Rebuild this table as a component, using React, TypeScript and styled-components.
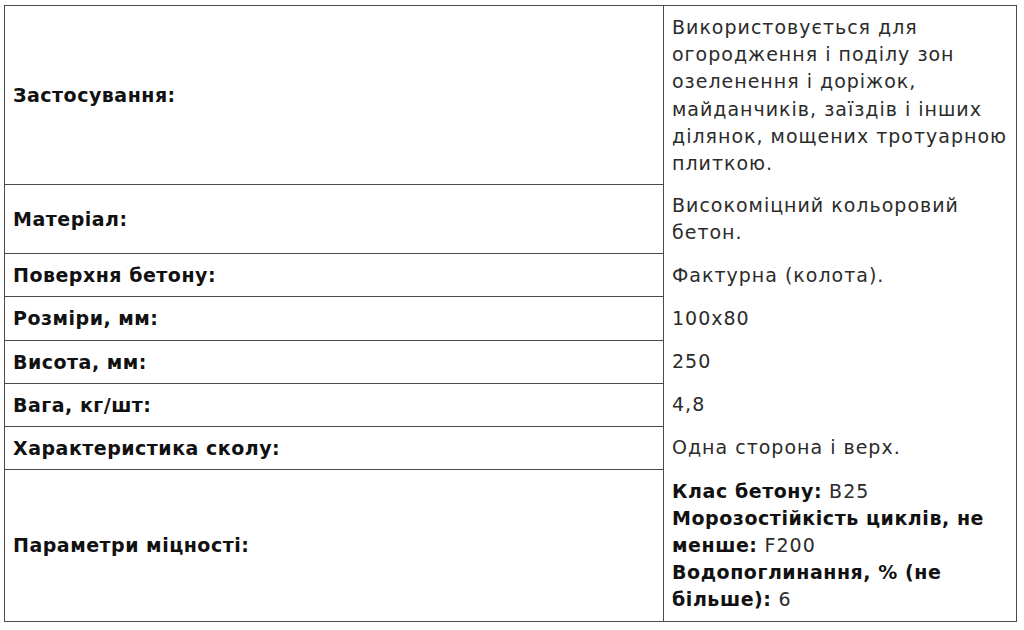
import React from 'react';
import styled, { createGlobalStyle } from 'styled-components';

const Global = createGlobalStyle`
  body {
    margin: 0;
    background: #fff;
    font-family: "DejaVu Sans", "Open Sans", sans-serif;
  }
`;

const Page = styled.div`
  padding: 5px 7px 0 4px;
`;

const Table = styled.table`
  width: 1013px;
  border-collapse: collapse;
  border: 1px solid #4a4a4a;
  font-size: 19px;
  line-height: 27.2px;
`;

const Label = styled.td`
  width: 642px;
  padding: 8px 8px 7px 8px;
  border-right: 1px solid #4a4a4a;
  border-bottom: 1px solid #4a4a4a;
  vertical-align: middle;
  font-weight: 700;
  letter-spacing: 0.5px;
  color: #111;
  white-space: nowrap;
`;

const Value = styled.td`
  padding: 8px 8px 7px 8px;
  vertical-align: top;
  letter-spacing: 1px;
  color: #2b2b2b;
  white-space: nowrap;
`;

const Strong = styled.b`
  font-weight: 700;
  letter-spacing: 0.55px;
  color: #111;
`;

type Spec = { label: string; lines: React.ReactNode[] };

const specs: Spec[] = [
  {
    label: 'Застосування:',
    lines: [
      'Використовується для',
      'огородження і поділу зон',
      'озеленення і доріжок,',
      'майданчиків, заїздів і інших',
      'ділянок, мощених тротуарною',
      'плиткою.',
    ],
  },
  { label: 'Матеріал:', lines: ['Високоміцний кольоровий', 'бетон.'] },
  { label: 'Поверхня бетону:', lines: ['Фактурна (колота).'] },
  { label: 'Розміри, мм:', lines: ['100x80'] },
  { label: 'Висота, мм:', lines: ['250'] },
  { label: 'Вага, кг/шт:', lines: ['4,8'] },
  { label: 'Характеристика сколу:', lines: ['Одна сторона і верх.'] },
  {
    label: 'Параметри міцності:',
    lines: [
      <><Strong>Клас бетону:</Strong> B25</>,
      <Strong>Морозостійкість циклів, не</Strong>,
      <><Strong>менше:</Strong> F200</>,
      <Strong>Водопоглинання, % (не</Strong>,
      <><Strong>більше):</Strong> 6</>,
    ],
  },
];

function App() {
  return (
    <>
      <Global />
      <Page>
        <Table>
          <tbody>
            {specs.map((s) => (
              <tr key={s.label}>
                <Label>{s.label}</Label>
                <Value>
                  {s.lines.map((l, i) => (
                    <React.Fragment key={i}>
                      {i > 0 && <br />}
                      {l}
                    </React.Fragment>
                  ))}
                </Value>
              </tr>
            ))}
          </tbody>
        </Table>
      </Page>
    </>
  );
}

export default App;
